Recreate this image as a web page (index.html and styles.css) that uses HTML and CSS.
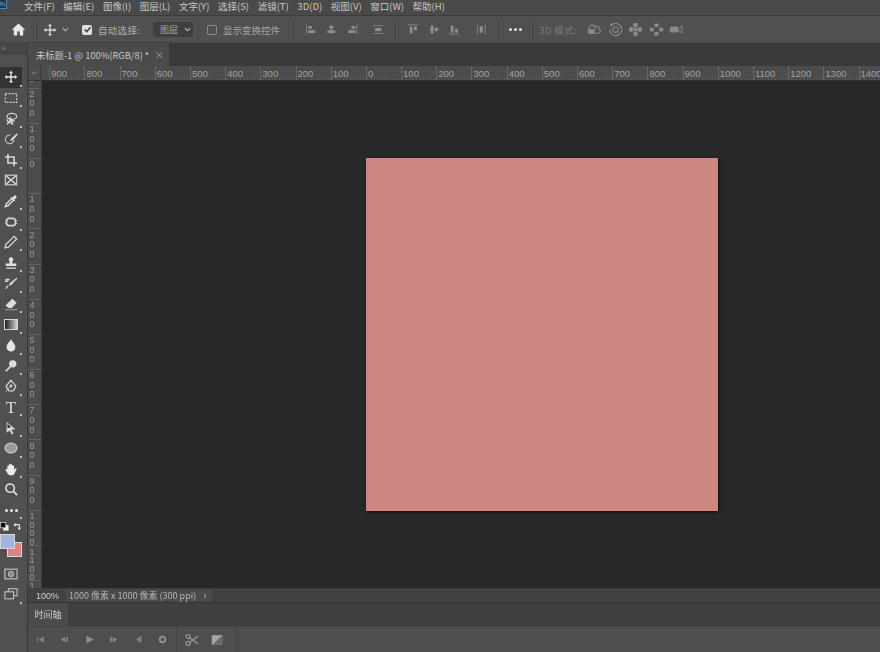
FILE: index.html
```html
<!DOCTYPE html>
<html lang="zh-CN">
<head>
<meta charset="utf-8">
<title>Photoshop</title>
<link rel="stylesheet" href="styles.css">
</head>
<body>
<div class="app">
  <header class="menubar">
    <div class="logo"><span>Ps</span></div>
    <nav class="menu">
      <span>文件(F)</span><span>编辑(E)</span><span>图像(I)</span><span>图层(L)</span><span>文字(Y)</span><span>选择(S)</span><span>滤镜(T)</span><span>3D(D)</span><span>视图(V)</span><span>窗口(W)</span><span>帮助(H)</span>
    </nav>
  </header>

  <div class="options">
    <div class="home"><svg viewBox="0 0 16 16" width="15" height="15"><path d="M8 1.500 0.800 8.200h2.200V14.500h3.600V10h2.800v4.500h3.600V8.200h2.200z" fill="#e8e8e8"/></svg></div>
    <i class="sep"></i>
    <div class="opt-move">
      <svg viewBox="0 0 16 16" width="14" height="14"><path d="M8 .8 10.300 3.400H8.800V7.200H12.600V5.700L15.200 8 12.600 10.300V8.800H8.800V12.600H10.300L8 15.200 5.700 12.600H7.200V8.800H3.400V10.300L.8 8 3.400 5.700V7.200H7.200V3.400H5.700z" fill="#d4d4d4"/></svg>
      <svg class="caret" viewBox="0 0 8 8" width="7" height="7"><path d="M1 2.500 4 5.500 7 2.500" fill="none" stroke="#bcbcbc" stroke-width="1.200"/></svg>
    </div>
    <label class="check on"><svg viewBox="0 0 10 10" width="9" height="9"><path d="M1.800 5 4.200 7.400 8.300 2.500" fill="none" stroke="#3f3f3f" stroke-width="1.800"/></svg></label>
    <span class="opt-text auto">自动选择:</span>
    <div class="select"><span>图层</span><svg viewBox="0 0 8 8" width="7" height="7"><path d="M1 2.500 4 5.500 7 2.500" fill="none" stroke="#c4c4c4" stroke-width="1.200"/></svg></div>
    <i class="sep sep-select"></i>
    <label class="check"></label>
    <span class="opt-text dim transform">显示变换控件</span>
    <i class="sep sep-transform"></i>
    <div class="aligns">
      <svg viewBox="0 0 16 16"><path d="M2 1.500v13" stroke="#8e8e8e" fill="none"/><path d="M4 3.500h5v3.500H4zM4 9h9v3.500H4z" fill="#8e8e8e"/></svg>
      <svg viewBox="0 0 16 16"><path d="M8 1.500v13" stroke="#8e8e8e" fill="none"/><path d="M5.500 3.500h5v3.500h-5zM3 9h10v3.500H3z" fill="#8e8e8e"/></svg>
      <svg viewBox="0 0 16 16"><path d="M14 1.500v13" stroke="#8e8e8e" fill="none"/><path d="M7 3.500h5v3.500H7zM3 9h9v3.500H3z" fill="#8e8e8e"/></svg>
      <svg class="wide" viewBox="0 0 16 16"><path d="M1.500 3h13M1.500 13h13" stroke="#8e8e8e" fill="none"/><path d="M4 6h8v4H4z" fill="#8e8e8e"/></svg>
    </div>
    <i class="sep"></i>
    <div class="aligns">
      <svg viewBox="0 0 16 16"><path d="M1.500 2h13" stroke="#8e8e8e" fill="none"/><path d="M3.500 4h3.500v9H3.500zM9 4h3.500v5H9z" fill="#8e8e8e"/></svg>
      <svg viewBox="0 0 16 16"><path d="M1.500 8h13" stroke="#8e8e8e" fill="none"/><path d="M3.500 3h3.500v10H3.500zM9 5.500h3.500v5H9z" fill="#8e8e8e"/></svg>
      <svg viewBox="0 0 16 16"><path d="M1.500 14h13" stroke="#8e8e8e" fill="none"/><path d="M3.500 3h3.500v9H3.500zM9 7h3.500v5H9z" fill="#8e8e8e"/></svg>
      <svg class="wide" viewBox="0 0 16 16"><path d="M3 1.500v13M13 1.500v13" stroke="#8e8e8e" fill="none"/><path d="M6 4h4v8H6z" fill="#8e8e8e"/></svg>
    </div>
    <i class="sep"></i>
    <div class="more"><b></b><b></b><b></b></div>
    <i class="sep"></i>
    <span class="opt-text faint mode">3D 模式:</span>
    <div class="modes">
      <svg viewBox="0 0 18 16"><g fill="none" stroke="#8a8a8a" stroke-width="1.300"><circle cx="6" cy="6.500" r="3.800"/><path d="M9 4.500a3.800 3.800 0 0 1 6 3.500c1.500 1 1.500 4-1 4.500H6"/><ellipse cx="5" cy="10.500" rx="3.500" ry="2.500" fill="#8a8a8a"/></g></svg>
      <svg viewBox="0 0 16 16"><g fill="none" stroke="#8a8a8a" stroke-width="1.200"><path d="M3.500 3.500A6.500 6.500 0 1 1 1.700 8"/><circle cx="8" cy="8" r="3"/></g><path d="M1.800 1.500 5.500 2 3 5z" fill="#8a8a8a"/></svg>
      <svg viewBox="0 0 16 16"><g fill="#8a8a8a"><circle cx="8" cy="3.500" r="2.600"/><circle cx="8" cy="12.500" r="2.600"/><circle cx="3.500" cy="8" r="2.600"/><circle cx="12.500" cy="8" r="2.600"/><rect x="6.500" y="6.500" width="3" height="3"/></g></svg>
      <svg viewBox="0 0 16 16"><g fill="#8a8a8a"><rect x="5.800" y="1.500" width="4.400" height="3.800" rx="1"/><rect x=".8" y="6.200" width="4.400" height="3.800" rx="1"/><rect x="10.800" y="6.200" width="4.400" height="3.800" rx="1"/><rect x="5.800" y="10.700" width="4.400" height="3.800" rx="1"/></g></svg>
      <svg viewBox="0 0 18 16"><rect x="1" y="4.500" width="10" height="7" rx="1.500" fill="#8a8a8a"/><path d="M11 7.500 15.500 3.500v9L11 8.500" fill="none" stroke="#8a8a8a" stroke-width="1.100"/></svg>
    </div>
  </div>

  <div class="workspace">
    <aside class="tools">
      <div class="collapse">››</div>
      <div class="tool-list">
        <button class="tool active corner"><svg viewBox="0 0 16 16"><path d="M8 .8 10.300 3.400H8.800V7.200H12.600V5.700L15.200 8 12.600 10.300V8.800H8.800V12.600H10.300L8 15.200 5.700 12.600H7.200V8.800H3.400V10.300L.8 8 3.400 5.700V7.200H7.200V3.400H5.700z" fill="#e6e6e6"/></svg></button>
        <button class="tool corner"><svg viewBox="0 0 16 16"><rect x="1.500" y="3" width="13" height="10" fill="none" stroke="#d0d0d0" stroke-width="1.300" stroke-dasharray="2.200 1.400"/></svg></button>
        <button class="tool corner"><svg viewBox="0 0 16 16"><g fill="none" stroke="#d0d0d0" stroke-width="1.400"><ellipse cx="9" cy="5" rx="5.500" ry="3.500"/><path d="M4 8.500c-1.500 2 1 3 2 2.500M6 10.500 3.500 14.500"/></g><path d="M6 5 13 10.500 9.500 11 11 14 9 15 7.500 12 5.500 14z" fill="#d0d0d0"/></svg></button>
        <button class="tool corner"><svg viewBox="0 0 16 16"><path d="M7.500 3.500A5 5 0 1 0 11.500 9" fill="none" stroke="#c0c0c0" stroke-width="1.300"/><path d="M14.800 1.500 8.500 7.500 7 10.500 10 9.300 15.500 3z" fill="#e0e0e0"/></svg></button>
        <button class="tool corner"><svg viewBox="0 0 16 16"><path d="M4.500 1v10.500H15M1 4.500h10.500V15" fill="none" stroke="#d8d8d8" stroke-width="1.800"/></svg></button>
        <button class="tool"><svg viewBox="0 0 16 16"><rect x="1.500" y="2.500" width="13" height="11" fill="none" stroke="#cfcfcf" stroke-width="1.300"/><path d="M2 3 14 13M14 3 2 13" stroke="#cfcfcf" stroke-width="1.600"/></svg></button>
        <button class="tool corner"><svg viewBox="0 0 16 16"><path d="M8.500 5.500 2.500 11.500 1.500 14.500 4.500 13.500 10.500 7.500" fill="none" stroke="#dcdcdc" stroke-width="1.700"/><path d="M7.500 4.500 8.800 3.200 9.800 4.200 11.800 1.800C12.800 .8 15.200 3.200 14.200 4.200L11.800 6.200 12.800 7.200 11.500 8.500z" fill="#e4e4e4"/></svg></button>
        <button class="tool corner"><svg viewBox="0 0 16 16"><rect x="3" y="4" width="10" height="8" rx="2.500" fill="none" stroke="#d8d8d8" stroke-width="1.800"/><path d="M1 6.500h2M1 9.500h2M13 6.500h2M13 9.500h2M6 2v2M10 2v2M6 12v2M10 12v2" stroke="#d8d8d8"/></svg></button>
        <button class="tool corner"><svg viewBox="0 0 16 16"><path d="M11.500 1.500 14.500 4.500 5 14l-3.800.8L2 11z" fill="none" stroke="#d4d4d4" stroke-width="1.500"/></svg></button>
        <button class="tool corner"><svg viewBox="0 0 16 16"><path d="M8 1.500a2.600 2.600 0 0 1 1.800 4.500c-.5.700-.3 1.500 0 2.500H14v3H2v-3h4.200c.3-1 .5-1.800 0-2.500A2.600 2.600 0 0 1 8 1.500zM2.500 13h11v1.500h-11z" fill="#e0e0e0"/></svg></button>
        <button class="tool corner"><svg viewBox="0 0 16 16"><path d="M15 1.500 7 8 5 11.500 8.500 10 14.800 3z" fill="#e0e0e0"/><path d="M1.500 4h5M5 6H1M4.500 11 2 14.500" stroke="#d0d0d0" stroke-width="1.500"/></svg></button>
        <button class="tool corner"><svg viewBox="0 0 16 16"><path d="M9.500 2 14.500 6.500 9 12.500H5L1.800 9.500z" fill="#dcdcdc"/><path d="M1 14.500h14" stroke="#a8a8a8"/></svg></button>
        <button class="tool corner"><span class="gradient"></span></button>
        <button class="tool corner"><svg viewBox="0 0 16 16"><path d="M8 1.500C9.500 4.500 13 7 13 10.500a5 5 0 0 1-10 0C3 7 6.500 4.500 8 1.500z" fill="#e6e6e6"/></svg></button>
        <button class="tool corner"><svg viewBox="0 0 16 16"><circle cx="10" cy="5.500" r="4.200" fill="#dcdcdc"/><path d="M7.200 8.800 2 14" stroke="#dcdcdc" stroke-width="2"/></svg></button>
        <button class="tool corner"><svg viewBox="0 0 16 16"><path d="M8 1.500 13.500 8c-1 3-2 4.500-3 5.500h-5c-1-1-2-2.500-3-5.500z" fill="none" stroke="#d4d4d4" stroke-width="1.400"/><circle cx="8" cy="8" r="1.600" fill="#d4d4d4"/><path d="M2 14.500 8 8" stroke="#d4d4d4"/></svg></button>
        <button class="tool corner type">T</button>
        <button class="tool corner"><svg viewBox="0 0 16 16"><path d="M3 1 13 9.500 8.500 10 11 14.500 9 15.500 6.700 11 3 13.500z" fill="#d8d8d8"/><path d="M4 2.800 8 7 4 8z" fill="#2a2a2a"/></svg></button>
        <button class="tool corner"><svg viewBox="0 0 16 16"><ellipse cx="8" cy="8" rx="6.800" ry="5.800" fill="#9a9a9a" stroke="#d2d2d2" stroke-width="1.200"/></svg></button>
        <button class="tool corner"><svg viewBox="0 0 16 16"><path d="M3.800 8V4.500a1 1 0 0 1 1.800 0V3a1 1 0 0 1 2 0v.5a1 1 0 0 1 2 0v1a1 1 0 0 1 1.900.3V9l1.300-1.500c1-.8 2 .2 1.400 1.200L11.500 14c-.5.800-1 1-2 1H7c-1.200 0-2-.5-2.600-1.500L1.800 9.500C1.300 8.500 2.500 7.500 3.300 8.300z" fill="#ececec"/></svg></button>
        <button class="tool"><svg viewBox="0 0 16 16"><circle cx="7" cy="7" r="4.800" fill="none" stroke="#dcdcdc" stroke-width="1.800"/><path d="M10.500 10.500 15 15" stroke="#dcdcdc" stroke-width="2.200"/></svg></button>
        <button class="tool dots corner"><b></b><b></b><b></b></button>
      </div>
      <div class="colors">
        <div class="mini">
          <svg viewBox="0 0 10 10" width="9" height="9"><rect x="3.500" y="3.500" width="6" height="6" fill="#eee"/><rect x=".5" y=".5" width="6" height="6" fill="#111" stroke="#eee" stroke-width=".7"/></svg>
          <svg viewBox="0 0 10 10" width="9" height="9"><path d="M1 3h6v5" fill="none" stroke="#ddd" stroke-width="1.300"/><path d="M3 .8V5.200L.5 3zM5 6.500h4L7 9.200z" fill="#ddd"/></svg>
        </div>
        <div class="swatches"><i class="bg"></i><i class="fg"></i></div>
      </div>
      <div class="tool-foot">
        <button class="tool"><svg viewBox="0 0 16 16"><rect x="1" y="2.500" width="14" height="11" fill="none" stroke="#c4c4c4" stroke-width="1.300"/><circle cx="8" cy="8" r="3.200" fill="#8c8c8c" stroke="#c4c4c4"/></svg></button>
        <button class="tool corner"><svg viewBox="0 0 16 16"><rect x="5" y="2" width="10" height="8" fill="#505050" stroke="#c8c8c8" stroke-width="1.200"/><rect x="1" y="5.500" width="10" height="8" fill="#505050" stroke="#c8c8c8" stroke-width="1.200"/></svg></button>
      </div>
    </aside>

    <main class="docs">
      <div class="tabs">
        <div class="tab"><span>未标题-1 @ 100%(RGB/8) *</span><em>×</em></div>
      </div>
      <div class="ruler-top">
        <div class="corner-box"><svg viewBox="0 0 8 8" width="6" height="6"><path d="M1 2.500 4 5.500 7 2.500" fill="none" stroke="#9a9a9a" stroke-width="1.200"/></svg></div>
        <div class="lead"></div>
        <span>900</span><span>800</span><span>700</span><span>600</span><span>500</span><span>400</span><span>300</span><span>200</span><span>100</span><span>0</span><span>100</span><span>200</span><span>300</span><span>400</span><span>500</span><span>600</span><span>700</span><span>800</span><span>900</span><span>1000</span><span>1100</span><span>1200</span><span>1300</span><span>1400</span>
      </div>
      <div class="stage">
        <div class="ruler-left">
          <div class="lead-v"><span>0</span></div>
          <div class="vcell"><span>2</span><span>0</span><span>0</span></div>
          <div class="vcell"><span>1</span><span>0</span><span>0</span></div>
          <div class="vcell"><span>0</span></div>
          <div class="vcell"><span>1</span><span>0</span><span>0</span></div>
          <div class="vcell"><span>2</span><span>0</span><span>0</span></div>
          <div class="vcell"><span>3</span><span>0</span><span>0</span></div>
          <div class="vcell"><span>4</span><span>0</span><span>0</span></div>
          <div class="vcell"><span>5</span><span>0</span><span>0</span></div>
          <div class="vcell"><span>6</span><span>0</span><span>0</span></div>
          <div class="vcell"><span>7</span><span>0</span><span>0</span></div>
          <div class="vcell"><span>8</span><span>0</span><span>0</span></div>
          <div class="vcell"><span>9</span><span>0</span><span>0</span></div>
          <div class="vcell four"><span>1</span><span>0</span><span>0</span><span>0</span></div>
          <div class="vcell four"><span>1</span><span>1</span><span>0</span><span>0</span></div>
          <div class="vcell"><span>1</span></div>
        </div>
        <div class="canvas-area"><div class="canvas"></div></div>
      </div>
      <div class="status">
        <span class="zoom">100%</span>
        <span class="info">1000 像素 x 1000 像素 (300 ppi)<em>›</em></span>
      </div>
      <section class="timeline">
        <div class="tl-tabs"><div class="tl-tab">时间轴</div></div>
        <div class="tl-ctrl">
          <div class="tl-group">
            <svg viewBox="0 0 16 16"><path d="M3 4v8h1.500V4zM13 3.500v9L5.500 8z" fill="#838383"/></svg>
            <svg viewBox="0 0 16 16"><path d="M9 3.500v9L2.500 8zM10.500 4.500H13v7h-2.500z" fill="#838383"/></svg>
            <svg viewBox="0 0 16 16"><path d="M3.500 2.500v11L14 8z" fill="#8f8f8f"/></svg>
            <svg viewBox="0 0 16 16"><path d="M7 3.500v9L13.500 8zM3 4.500h2.500v7H3z" fill="#838383"/></svg>
            <svg viewBox="0 0 16 16"><path d="M12 2.500v11L4.500 8z" fill="#838383"/></svg>
            <svg viewBox="0 0 16 16"><circle cx="8" cy="8" r="4" fill="none" stroke="#8f8f8f" stroke-width="2.800"/></svg>
          </div>
          <div class="tl-group second">
            <svg viewBox="0 0 16 16"><g fill="none" stroke="#9a9a9a" stroke-width="1.300"><circle cx="3.500" cy="4" r="2.300"/><circle cx="3.500" cy="12" r="2.300"/><path d="M5.500 5.500 15 12.500M5.500 10.500 15 3.500"/></g></svg>
            <svg viewBox="0 0 16 16"><rect x="2" y="2.500" width="12" height="11" fill="#a4a4a4"/><path d="M14 2.500v11H3z" fill="#6a6a6a"/></svg>
          </div>
        </div>
      </section>
    </main>
  </div>
</div>
</body>
</html>
```
FILE: styles.css
```css
* { box-sizing: border-box; }
html, body { margin: 0; padding: 0; height: 100%; }
body {
  background: #4c4c4c;
  color: #bdbdbd;
  font-family: "Noto Sans CJK SC", "Liberation Sans", sans-serif;
  overflow: hidden;
}
.app { width: 880px; height: 652px; display: flex; flex-direction: column; overflow: hidden; filter: blur(.45px); }

/* menu */
.menubar { height: 16px; display: flex; align-items: flex-start; background: #4a4a4a; border-bottom: 1px solid #3c3c3c; flex: none; }
.logo { width: 24px; height: 15px; flex: none; overflow: hidden; }
.logo span { display: block; width: 7px; height: 9px; background: #1b3a52; border: 1px solid #4d86ad; border-left: 0; border-top: 0; color: #6fb6e8; font-size: 5px; line-height: 8px; overflow: hidden; }
.menu { display: flex; gap: 8.600px; font-size: 9.500px; line-height: 12px; color: #c8c8c8; white-space: nowrap; }

/* options */
.options { height: 27px; flex: none; display: flex; align-items: center; padding-top: 1px; background: #505050; border-bottom: 1px solid #454545; font-size: 9.500px; white-space: nowrap; }
.home { width: 36px; display: flex; justify-content: center; flex: none; }
.sep { width: 1px; height: 20px; background: #464646; flex: none; }
.opt-move { width: 41px; padding-left: 6px; display: flex; align-items: center; gap: 5px; flex: none; }
.check { width: 10px; height: 10px; border-radius: 2px; background: #e0e0e0; display: flex; align-items: center; justify-content: center; flex: none; margin-left: 4px; }
.check:not(.on) { background: none; border: 1px solid #8a8a8a; margin-left: 8px; }
.opt-text { color: #b0b0b0; letter-spacing: .3px; }
.opt-text.auto { margin-left: 6px; width: 55px; }
.opt-text.dim { color: #a4a4a4; }
.opt-text.transform { margin-left: 6px; width: 70px; letter-spacing: 0; }
.opt-text.faint { color: #787878; }
.select { width: 40px; height: 15px; background: #3f3f3f; border-radius: 2px; display: flex; align-items: center; justify-content: space-between; padding: 0 2px 0 7px; color: #aaa; font-size: 9px; flex: none; }
.sep-select { margin-left: 5px; }
.aligns { display: flex; align-items: center; padding-left: 6.750px; padding-right: 6.500px; }
.aligns svg { width: 12.500px; height: 13px; margin: 0 4px; flex: none; }
.aligns svg.wide { margin-left: 10px; }
.more { width: 33px; display: flex; justify-content: center; gap: 2px; flex: none; }
.more b { width: 3px; height: 3px; border-radius: 50%; background: #e4e4e4; }
.mode { margin-left: 7px; width: 47.500px; letter-spacing: .3px; }
.modes { display: flex; align-items: center; gap: 5.500px; }
.modes svg { width: 15px; height: 15px; flex: none; }

/* workspace */
.workspace { flex: 1; display: flex; min-height: 0; }
.tools { width: 28px; flex: none; background: #505050; border-right: 1px solid #3a3a3a; display: flex; flex-direction: column; }
.collapse { height: 12px; flex: none; font-size: 8px; line-height: 9px; color: #a0a0a0; padding-left: 1px; background: #464646; }
.tool-list { padding-top: 12px; }
.tool { position: relative; display: flex; align-items: center; justify-content: center; width: 22px; height: 20.620px; padding: 0; border: 0; background: none; color: #ddd; }
.tool svg { width: 14px; height: 14px; display: block; }
.tool.corner::after { content: ""; position: absolute; right: 0; bottom: 1px; width: 2px; height: 2px; background: #bdbdbd; }
.tool.active { background: #333; }
.type { font-family: "Liberation Serif", serif; font-size: 17px; line-height: 1; }
.gradient { width: 14px; height: 11px; display: block; border: 1px solid #d8d8d8; background: linear-gradient(90deg, #1f1f1f, #cfcfcf); }
.dots { gap: 2px; }
.dots b { width: 3px; height: 3px; border-radius: 50%; background: #e2e2e2; flex: none; }
.colors { height: 47px; flex: none; padding-top: 2px; }
.mini { display: flex; justify-content: space-between; width: 22px; }
.swatches { position: relative; width: 24px; height: 30px; margin-top: 2px; }
.swatches i { position: absolute; width: 15px; height: 15px; display: block; border: 1px solid #d8d8d8; }
.swatches .fg { left: 0; top: 1px; background: #a0b6de; z-index: 1; }
.swatches .bg { left: 7px; top: 9px; background: #dd827c; }
.tool-foot { margin-top: -4px; }

/* documents */
.docs { flex: 1; min-width: 0; display: flex; flex-direction: column; }
.tabs { height: 23px; flex: none; background: #3a3a3a; display: flex; }
.tab { width: 141px; background: #4b4b4b; display: flex; align-items: center; padding-left: 8px; font-size: 9.300px; color: #c8c8c8; white-space: nowrap; }
.tab em { font-style: normal; margin-left: 5px; color: #999; font-size: 10px; }
.ruler-top { height: 15px; flex: none; background: #4c4c4c; border-bottom: 1px solid #333; display: flex; font-size: 9.500px; line-height: 16px; color: #a2a2a2; white-space: nowrap; overflow: hidden; font-family: "Liberation Sans", sans-serif; }
.corner-box { width: 13px; flex: none; border-right: 1px solid #3d3d3d; display: flex; align-items: center; justify-content: center; }
.lead { width: 8.200px; flex: none; }
.ruler-top span { flex: none; width: 35.200px; padding-left: 1px; border-left: 1px solid #666; background: repeating-linear-gradient(90deg, #5a5a5a 0 1px, transparent 1px 3.520px) left bottom / 100% 2px no-repeat; }
.stage { flex: 1; display: flex; min-height: 0; }
.ruler-left { width: 14px; flex: none; padding-right: 5px; background: #4c4c4c; border-right: 1px solid #3c3c3c; overflow: hidden; font-family: "Liberation Sans", sans-serif; font-size: 9px; line-height: 9.600px; color: #9c9c9c; text-align: center; }
.ruler-left span { display: block; }
.lead-v { height: 6.600px; overflow: hidden; }
.lead-v span { margin-top: -6px; }
.vcell { height: 35.200px; margin-right: -5px; padding-right: 5px; border-top: 1px solid #626262; padding-top: 1.200px; }
.vcell.four { line-height: 8.500px; padding-top: 1.600px; }
.canvas-area { flex: 1; background: #282828; padding: 77px 0 0 324px; }
.canvas { width: 352px; height: 353px; background: #cb8780; box-shadow: 1px 1px 3px rgba(0,0,0,.7); }
.status { height: 15px; flex: none; background: #424242; display: flex; align-items: center; font-size: 9px; border-top: 1px solid #3d3d3d; border-bottom: 1px solid #333; white-space: nowrap; }
.zoom { width: 38px; padding-left: 8px; color: #cfcfcf; font-family: "Liberation Sans", sans-serif; }
.info { width: 146px; background: #4a4a4a; height: 13px; line-height: 13px; padding-left: 3px; color: #b4b4b4; }
.info em { font-style: normal; margin-left: 7px; font-size: 11px; line-height: 10px; }
.timeline { height: 49px; flex: none; display: flex; flex-direction: column; }
.tl-tabs { height: 23px; flex: none; background: #3f3f3f; display: flex; }
.tl-tab { width: 40px; background: #4b4b4b; font-size: 9px; line-height: 23px; text-align: center; color: #cfcfcf; }
.tl-ctrl { flex: 1; background: #4e4e4e; border-top: 1px solid #444; display: flex; align-items: center; }
.tl-group { display: flex; align-items: center; gap: 13.500px; padding: 0 8px 0 6.500px; height: 100%; border-right: 1px solid #414141; }
.tl-group svg { width: 11px; height: 11px; flex: none; }
.tl-group.second { gap: 11px; padding: 0 0 0 8px; width: 60px; }
.tl-group.second svg { width: 14px; height: 14px; }
```
